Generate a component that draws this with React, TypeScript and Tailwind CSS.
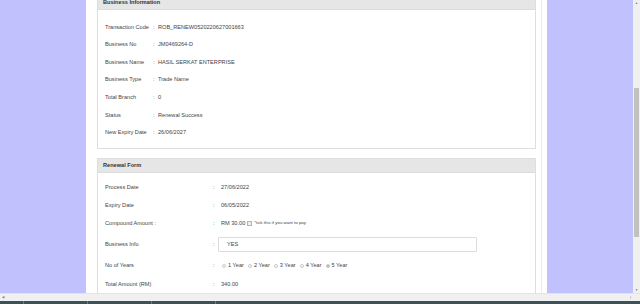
import * as React from "react";

type Row = { label: string; value: string };

const businessRows: Row[] = [
  { label: "Transaction Code", value: "ROB_RENEW0520220627001663" },
  { label: "Business No", value: "JM0469264-D" },
  { label: "Business Name", value: "HASIL SERKAT ENTERPRISE" },
  { label: "Business Type", value: "Trade Name" },
  { label: "Total Branch", value: "0" },
  { label: "Status", value: "Renewal Success" },
  { label: "New Expiry Date", value: "26/06/2027" },
];

const years = ["1 Year", "2 Year", "3 Year", "4 Year", "5 Year"];

function PanelHeader({ title }: { title: string }) {
  return (
    <div className="h-[14px] flex items-center px-[5px] bg-[#e6e6e6] border-b border-[#dcdcdc] font-bold text-[#333]">
      {title}
    </div>
  );
}

function FormRow({ label, h, children }: { label: string; h: string; children: React.ReactNode }) {
  return (
    <div className={`flex items-center ${h}`}>
      <div className="w-[108px] shrink-0">{label}</div>
      <div className="w-[8px] shrink-0">:</div>
      <div className="flex items-center">{children}</div>
    </div>
  );
}

function Radio({ checked }: { checked?: boolean }) {
  return (
    <span
      className={
        "inline-block w-[4px] h-[4px] rounded-full border border-[#c8c8c8] mr-[2px] " +
        (checked ? "bg-[#bdbdbd]" : "bg-white")
      }
    />
  );
}

export default function App() {
  return (
    <div
      className="w-[640px] h-[304px] flex flex-col overflow-hidden text-[5.6px] text-[#444]"
      style={{ fontFamily: '"Liberation Sans", Arial, sans-serif' }}
    >
      <div className="flex flex-1 min-h-0">
        {/* page */}
        <div className="flex flex-1 bg-[#c1c1fd]">
          <div className="w-[86px] shrink-0" />
          <div className="w-[461px] shrink-0 bg-white pl-[11px] pr-[5px] flex">
            <div className="flex-1 border-r border-[#ececec] pr-[5px]">
              <div className="-mt-[5px] flex flex-col gap-[9px]">
                {/* Business Information */}
                <div className="border border-[#dedede]">
                  <PanelHeader title="Business Information" />
                  <div className="pt-[8px] pb-[7px] px-[7px]">
                    {businessRows.map((r) => (
                      <div key={r.label} className="flex items-center h-[17.6px]">
                        <div className="w-[48px] shrink-0">{r.label}</div>
                        <div className="w-[5px] shrink-0">:</div>
                        <div>{r.value}</div>
                      </div>
                    ))}
                  </div>
                </div>

                {/* Renewal Form */}
                <div className="border border-[#dedede] h-[150px]">
                  <PanelHeader title="Renewal Form" />
                  <div className="pt-[5px] px-[7px]">
                    <FormRow label="Process Date" h="h-[18px]">27/06/2022</FormRow>
                    <FormRow label="Expiry Date" h="h-[18px]">06/05/2022</FormRow>
                    <FormRow label="Compound Amount :" h="h-[18px]">
                      <span>RM 30.00</span>
                      <span className="inline-block w-[5px] h-[5px] border border-[#b5b5b5] bg-[#eee] ml-[2px] mr-[2px]" />
                      <span className="text-[4.4px]">*tick this if you want to pay</span>
                    </FormRow>
                    <FormRow label="Business Info" h="h-[24px]">
                      <div className="w-[259px] h-[15px] -ml-[3px] border border-[#dcdcdc] rounded-[1px] flex items-center px-[8px]">
                        YES
                      </div>
                    </FormRow>
                    <FormRow label="No of Years" h="h-[19px]">
                      <div className="flex items-center gap-[4px] ml-[1px]">
                        {years.map((y, i) => (
                          <span key={y} className="flex items-center">
                            <Radio checked={i === 4} />
                            {y}
                          </span>
                        ))}
                      </div>
                    </FormRow>
                    <FormRow label="Total Amount (RM)" h="h-[18px]">340.00</FormRow>
                  </div>
                </div>
              </div>
            </div>
          </div>
          <div className="flex-1" />
        </div>

        {/* vertical scrollbar */}
        <div className="w-[7px] shrink-0 bg-[#f0f0f0] flex flex-col items-center">
          <div className="h-[6px] flex items-center justify-center text-[#666] text-[3px]">▲</div>
          <div className="h-[82px]" />
          <div className="w-[5px] h-[149px] bg-[#c1c1c1]" />
          <div className="flex-1" />
          <div className="h-[6px] flex items-center justify-center text-[#666] text-[3px]">▼</div>
        </div>
      </div>

      {/* horizontal scrollbar */}
      <div className="h-[8px] shrink-0 bg-[#f0f0f0] border-t border-[#e4e4e4] flex items-center justify-between px-[2px] text-[#777] text-[3px]">
        <span>◀</span>
        <span className="mr-[6px]">⋮</span>
      </div>
      {/* taskbar strip */}
      <div className="h-[3px] shrink-0 bg-[#3e5058] flex">
        <div className="w-[24px] border-r border-[#6a7a80]" />
        <div className="w-[64px] border-r border-[#6a7a80]" />
        <div className="w-[64px] border-r border-[#6a7a80]" />
        <div className="w-[64px] border-r border-[#6a7a80]" />
      </div>
    </div>
  );
}
